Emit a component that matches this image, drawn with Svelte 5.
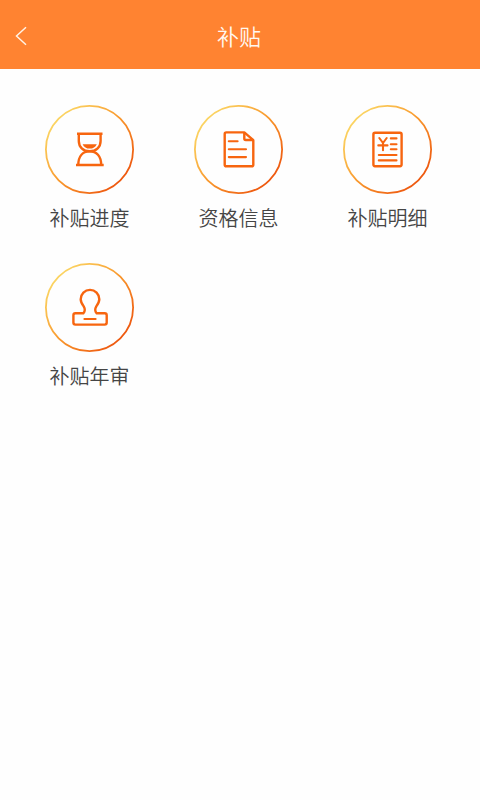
<script>
    // Itens do menu de subsídios, na ordem em que aparecem na grade.
    const items = [
        { icon: 'hourglass', label: '补贴进度' },
        { icon: 'document', label: '资格信息' },
        { icon: 'bill', label: '补贴明细' },
        { icon: 'stamp', label: '补贴年审' },
    ];
</script>

<div class="page">
    <header class="top-bar">
        <button class="btn-back" aria-label="返回">
            <svg width="12" height="20" viewBox="0 0 12 20">
                <path d="M11 1.2 L1.5 10 L11 18.8" />
            </svg>
        </button>
        <h1>补贴</h1>
    </header>

    <main class="menu-grid">
        {#each items as item}
            <button class="menu-item">
                <svg class="menu-icon" viewBox="0 0 89 89">
                    <defs>
                        <linearGradient id="ring-{item.icon}" x1="0.1" y1="0.15" x2="0.85" y2="0.85">
                            <stop offset="0" stop-color="#fbd765" />
                            <stop offset="0.5" stop-color="#f99a2e" />
                            <stop offset="1" stop-color="#ee5a10" />
                        </linearGradient>
                    </defs>
                    <circle cx="44.5" cy="44.5" r="43.6" stroke="url(#ring-{item.icon})" stroke-width="1.8" />

                    {#if item.icon === 'hourglass'}
                        <path d="M32 28.8 H57.5 M31 60 H58.7" />
                        <path d="M33.8 29 V36 C33.8 42 38 46.2 44.7 46.2 S55.6 42 55.6 36 V29" />
                        <path d="M33.3 60 C33.3 51 38 46.2 44.7 46.2 S56.2 51 56.2 60" />
                        <path class="fill" d="M37.6 39.2 H51.8 C50.4 42.2 48 43.6 44.7 43.6 S39 42.2 37.6 39.2 Z" />
                    {:else if item.icon === 'document'}
                        <path d="M50.3 27.4 H32.3 Q30.7 27.4 30.7 29 V59.7 Q30.7 61.3 32.3 61.3 H57.7 Q59.3 61.3 59.3 59.7 V35.2 Z" />
                        <path d="M50.3 27.4 V33.6 Q50.3 35 51.7 35 H59.3" />
                        <path class="line" d="M34.8 36.3 H43.6 M34.8 44.3 H52 M34.8 52.1 H52" />
                    {:else if item.icon === 'bill'}
                        <rect x="30.4" y="27.8" width="28.2" height="33.4" rx="1.6" />
                        <path class="line" d="M36.3 33 L40 38 L43.7 33 M40 38 V45.3 M35.3 40.4 H44.5" />
                        <path class="line" d="M47.8 33.4 H53.5 M47.8 39.3 H53.5 M47.8 44.3 H53.5 M35.8 50 H53.5 M35.8 55.4 H53.5" />
                    {:else}
                        <path d="M38.3 50.3 H30.4 Q28.4 50.3 28.4 52.3 V59.6 Q28.4 61.6 30.4 61.6 H59.7 Q61.7 61.6 61.7 59.6 V52.3 Q61.7 50.3 59.7 50.3 H51.7 C50 48.6 49.8 46 51.3 43.4 C53 41 54.3 38.8 54.3 36.2 A9.3 9.3 0 0 0 35.7 36.2 C35.7 38.8 37 41 38.7 43.4 C40.2 46 40 48.6 38.3 50.3 Z" />
                        <path class="line" d="M39.4 56 H50.6" />
                    {/if}
                </svg>
                <span>{item.label}</span>
            </button>
        {/each}
    </main>
</div>

<style>
    :global(body) {
        background-color: #fefefe;
    }

    .page {
        min-height: 100vh;
        font-family: "Noto Sans CJK SC", sans-serif;
        font-weight: 350;
    }

    button {
        padding: 0;
        border: 0;
        background: none;
        font: inherit;
        cursor: pointer;
    }

    svg {
        display: block;
        fill: none;
    }

    /* Barra superior: voltar à esquerda, título no centro. */
    .top-bar {
        display: grid;
        grid-template-columns: 60px 1fr 62px;
        align-items: center;
        height: 69px;
        box-sizing: border-box;
        background-color: #ff8331;
    }

    .btn-back {
        padding: 2px 0 0 15px;
    }

    .btn-back svg {
        stroke: #fff3e6;
        stroke-width: 1.5;
    }

    h1 {
        margin: 0;
        text-align: center;
        font-size: 22px;
        line-height: 32px;
        font-weight: 350;
        color: #fff8f0;
    }

    /* Grade de três colunas com os atalhos. */
    .menu-grid {
        display: grid;
        grid-template-columns: repeat(3, 149px);
        row-gap: 30px;
        padding: 36px 15px 0;
    }

    .menu-item {
        display: flex;
        flex-direction: column;
        align-items: center;
        gap: 9px;
        font-size: 20px;
        line-height: 30px;
        color: #454545;
    }

    .menu-icon {
        width: 89px;
        height: 89px;
        stroke: #f7650f;
        stroke-width: 2.4;
        stroke-linejoin: round;
    }

    .menu-icon .line {
        stroke-width: 2.1;
        stroke-linecap: round;
    }

    .menu-icon .fill {
        fill: #f7650f;
        stroke: none;
    }
</style>
